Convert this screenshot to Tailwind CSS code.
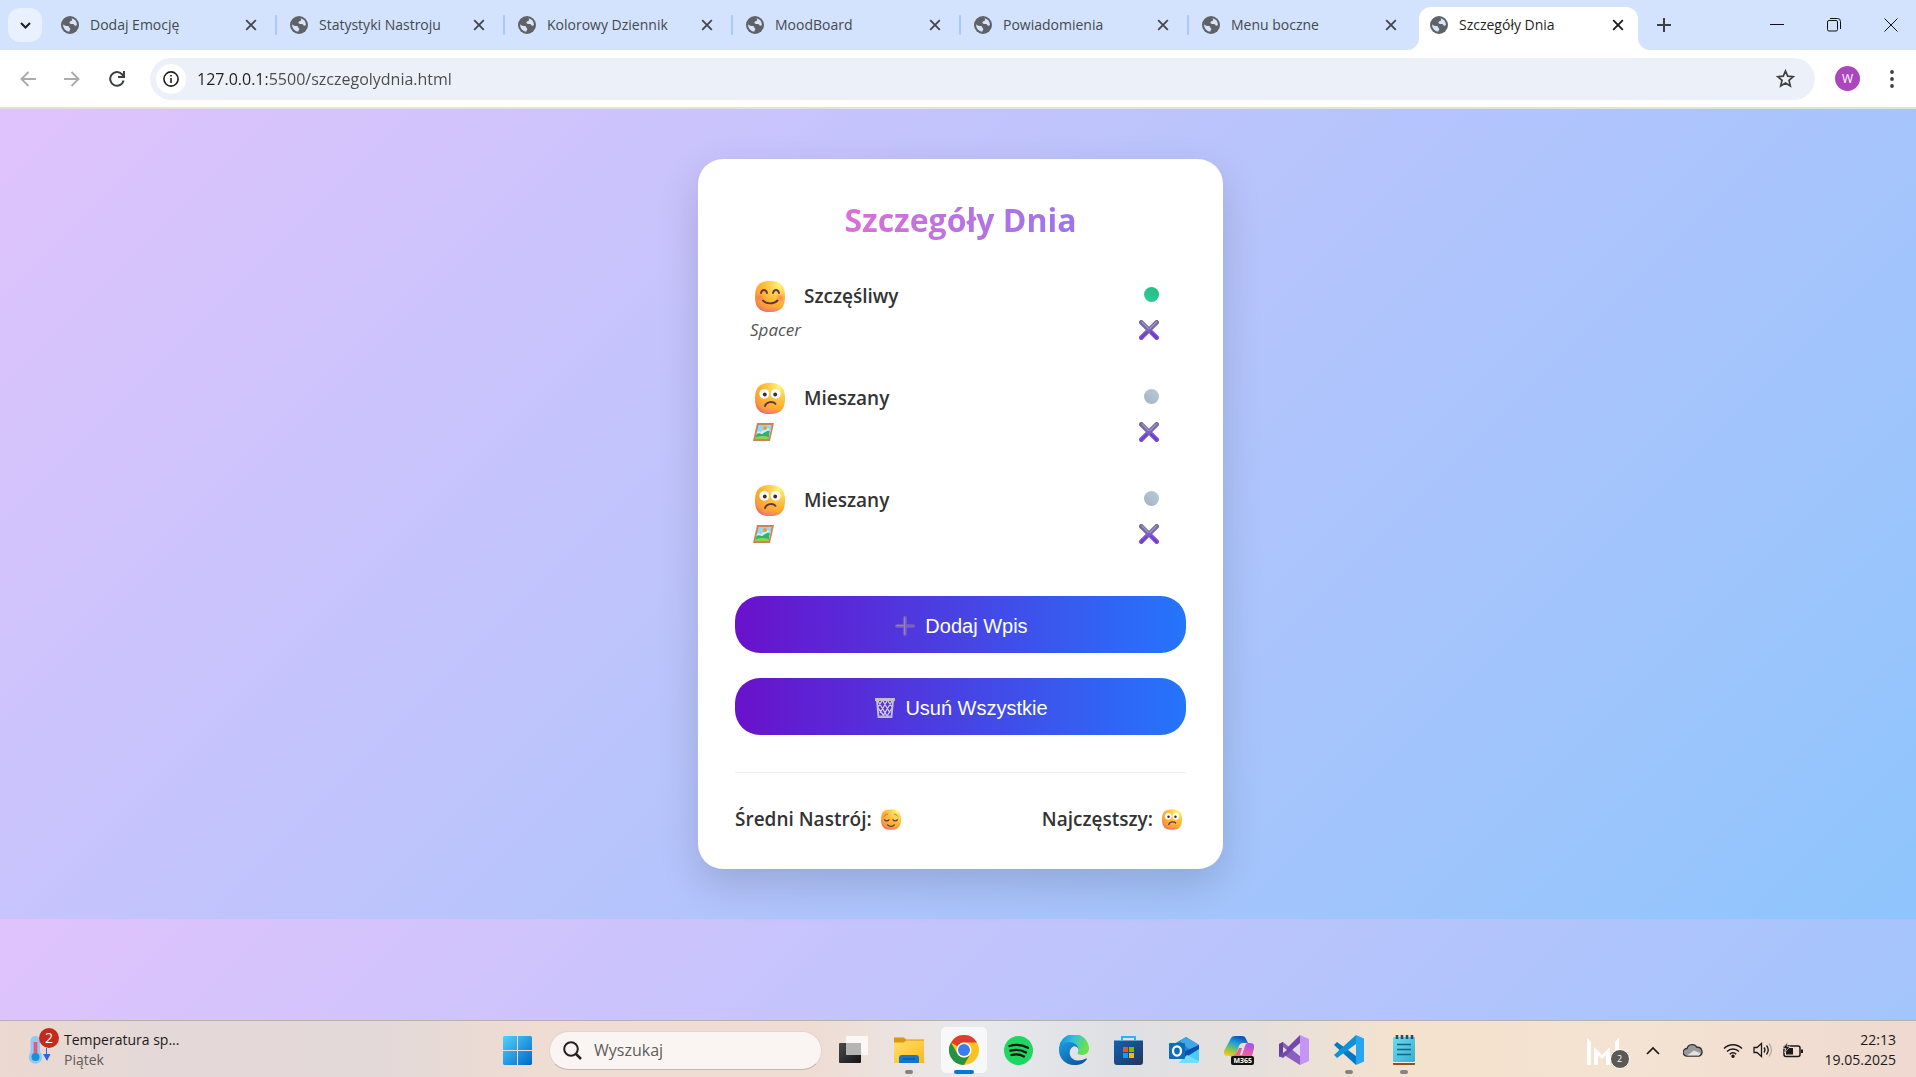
<!DOCTYPE html>
<html lang="pl">
<head>
<meta charset="utf-8">
<meta name="viewport" content="width=device-width, initial-scale=1">
<title>Szczegóły Dnia</title>
<script src="https://cdn.jsdelivr.net/npm/@tailwindcss/browser@4"></script>
</head>
<body class="flex min-h-screen flex-col font-['Open_Sans','Noto_Sans',sans-serif] text-[#333]">

<!-- Shared icon definitions -->
<svg class="absolute size-0" aria-hidden="true">
  <defs>
    <radialGradient id="gFace" cx="0.8" cy="0.12" r="1"><stop offset="0" stop-color="#fff478"/><stop offset="0.3" stop-color="#ffd04e"/><stop offset="0.65" stop-color="#ffb02e"/><stop offset="0.88" stop-color="#f79a3a"/><stop offset="1" stop-color="#f0705a"/></radialGradient>
    <radialGradient id="gBlush" cx="0.5" cy="1.05" r="0.55" gradientTransform="matrix(1 0 0 .4 0 .63)"><stop offset="0" stop-color="#f05fa0" stop-opacity="0.9"/><stop offset="1" stop-color="#f0709a" stop-opacity="0"/></radialGradient>
    <radialGradient id="gCheek"><stop offset="0" stop-color="#ff6a5e" stop-opacity="0.8"/><stop offset="1" stop-color="#ff7a5e" stop-opacity="0"/></radialGradient>
    <linearGradient id="gCross" x1="0" y1="0" x2="0.3" y2="1"><stop offset="0" stop-color="#74679c"/><stop offset="0.5" stop-color="#7a69b4"/><stop offset="1" stop-color="#7b4cd0"/></linearGradient>
    <linearGradient id="gWin" x1="0" y1="0" x2="1" y2="1"><stop offset="0" stop-color="#4fd3fb"/><stop offset="1" stop-color="#0067c8"/></linearGradient>
    <linearGradient id="gFolder" x1="0" y1="0" x2="1" y2="1"><stop offset="0" stop-color="#ffdf73"/><stop offset="1" stop-color="#fdb913"/></linearGradient>
    <linearGradient id="gEdgeA" x1="0" y1="0" x2="1" y2="0.3"><stop offset="0" stop-color="#0c7fd8"/><stop offset="0.5" stop-color="#2fc2df"/><stop offset="1" stop-color="#6be04a"/></linearGradient>
    <linearGradient id="gEdgeB" x1="0" y1="0" x2="1" y2="1"><stop offset="0" stop-color="#1b9de2"/><stop offset="1" stop-color="#0b4b97"/></linearGradient>
    <linearGradient id="gStore" x1="0" y1="0" x2="1" y2="1"><stop offset="0" stop-color="#0c63b8"/><stop offset="1" stop-color="#263559"/></linearGradient>
    <linearGradient id="gCopA" x1="0.6" y1="0" x2="0.2" y2="1"><stop offset="0" stop-color="#1450b4"/><stop offset="0.35" stop-color="#1d9fe0"/><stop offset="0.65" stop-color="#74c45a"/><stop offset="1" stop-color="#ffc61a"/></linearGradient>
    <linearGradient id="gCopB" x1="0.7" y1="0" x2="0.3" y2="1"><stop offset="0" stop-color="#a455ec"/><stop offset="0.5" stop-color="#ee5d9c"/><stop offset="1" stop-color="#ff7a3c"/></linearGradient>
    <linearGradient id="gNote" x1="0" y1="0" x2="1" y2="1"><stop offset="0" stop-color="#72dbee"/><stop offset="1" stop-color="#37add0"/></linearGradient>
    <linearGradient id="gDark" x1="0" y1="0" x2="1" y2="1"><stop offset="0" stop-color="#4a4a4a"/><stop offset="1" stop-color="#151515"/></linearGradient>

    <symbol id="globe" viewBox="0 0 18 18"><circle cx="9" cy="9" r="9" fill="#5f6368"/><path d="M2 7.600A7 7 0 0 1 8 2l-.2 1.300c0 .8-1.700.7-1.700 1.700 0 .9 1 .6 1 1.500 0 .7-.6 1.200-.2 1.700.4.500 1.300.3 2.300.3 1.600 0 1.300 1.600 2.200 1.900.8.300 2.200.1 2.400.9.200.8-1 1.200-1.600 1.800-.7.800-1.400 2.200-3.200 2.700-1.400.2-2.600 0-3.500-.5.600-.7 1.700-.6 2.200-1.400.4-.7-.3-1.300-.9-1.900-.8-.8-1.400-1.500-2.600-1.800C3 9.800 2.100 9.300 2 7.600z" fill="#5f6368"/><path d="M2.100 8.200c1.700 1.600 3 1.700 4.600 1.700 1.300 0 1.500.8 1.600 1.700.1.800.9.700 1 1.500.1 1-1 1.200-1 2.700A7 7 0 0 1 2.100 8.200z" fill="#d8e4fa"/><path d="M10.600 2.200A7 7 0 0 1 15.900 8.800c-.5 1-1.300 1.200-2.100.7-.8-.5-.6-1.500-1.700-1.600-1.300-.1-2.300.4-3.200-.3-.9-.8-.4-2 .5-2.400 1-.4 1.700-.3 1.700-1.300 0-.7-.3-1.100-.6-1.700z" fill="#d8e4fa"/></symbol>
    <symbol id="close" viewBox="0 0 12 12"><path d="M1.200 1.200l9.600 9.600M10.800 1.200l-9.600 9.600" stroke="currentColor" stroke-width="1.900" fill="none"/></symbol>
    <symbol id="head" viewBox="0 0 30 31"><path d="M15 0C26 0 30 5 30 15.500S26 31 15 31 0 26 0 15.500 4 0 15 0z" fill="url(#gFace)"/><path d="M15 0C26 0 30 5 30 15.500S26 31 15 31 0 26 0 15.500 4 0 15 0z" fill="url(#gBlush)"/></symbol>
    <symbol id="happy" viewBox="0 0 30 31"><use href="#head" width="30" height="31"/><circle cx="4.500" cy="17" r="5" fill="url(#gCheek)"/><circle cx="25.500" cy="17" r="5" fill="url(#gCheek)"/><path d="M6 12c1-4 5-4 6 0M18 12c1-4 5-4 6 0M8 19.500c3 3.800 11 3.800 14.500 0" fill="none" stroke="#5b3450" stroke-width="1.900" stroke-linecap="round"/></symbol>
    <symbol id="mixed" viewBox="0 0 30 31"><use href="#head" width="30" height="31"/><circle cx="9.300" cy="10.800" r="4.900" fill="#fff"/><circle cx="20.700" cy="10.800" r="4.900" fill="#fff"/><circle cx="9.800" cy="11.500" r="1.900" fill="#402a32"/><circle cx="20.200" cy="11.500" r="1.900" fill="#402a32"/><path d="M10 23c1.500-4.700 8-5 10.500-2.200" fill="none" stroke="#5b3450" stroke-width="1.900" stroke-linecap="round"/></symbol>
    <symbol id="calm" viewBox="0 0 30 31"><use href="#head" width="30" height="31"/><path d="M5.500 16c1.500 2 5 2 6.500 0M18 16c1.500 2 5 2 6.500 0M10 23.500c2.500 3 7.500 3 10 0" fill="none" stroke="#5b3450" stroke-width="2" stroke-linecap="round"/><path d="M5 10.500c1-2 3-3 5-3M20 7.500c2 0 4 1 5 3" fill="none" stroke="#b2611f" stroke-width="1.300" stroke-linecap="round"/></symbol>
    <symbol id="cross" viewBox="0 0 20 20"><path d="M2.300 2.300l15.400 15.400M17.700 2.300L2.300 17.700" stroke="url(#gCross)" stroke-width="4.600" stroke-linecap="round"/><path d="M2.800 1.800l6.500 6.500M17.500 1.800L11 8.300" stroke="#a29bc2" stroke-width="1.200" stroke-linecap="round"/><path d="M2 18.300l6-6M18 18.300l-6-6" stroke="#7334dc" stroke-width="1.300" stroke-linecap="round"/></symbol>
    <symbol id="picture" viewBox="0 0 21 18"><path d="M4 0h17l-4 18H0z" fill="#cf8254"/><path d="M5.500 2h13.200l-3 14H2.400z" fill="#8fd9f8"/><path d="M3.800 9.500c1.800-2 2.600-1 3.700-.3 2-2 4-2 5.500-3.500 1.500-.8 3-.4 4.500 1.500l-1.800 8.800H2.400z" fill="#cdeffb"/><path d="M3.500 11c3-1.700 4 .4 5.500 0 2-.7 4-3.200 7.800-3.400L15.700 16H2.400z" fill="#32b266"/><path d="M2.800 14.600c4-2 9-1.800 13.200-.4l-.4 1.800H2.400z" fill="#93cf58"/><circle cx="12" cy="5" r="2" fill="#f79b1e"/></symbol>
  </defs>
</svg>

<!-- Browser tabs -->
<header>
  <div class="flex h-[50px] items-stretch bg-[#d3e3fd]">
    <button aria-label="Wyszukaj karty" class="mt-2 ml-2 flex h-[34px] w-[34px] shrink-0 items-center justify-center rounded-xl bg-[#e9f0fe]"><svg class="h-[7px] w-[11px]" viewBox="0 0 11 7"><path d="M1 1l4.500 4.500L10 1" fill="none" stroke="#1f1f1f" stroke-width="2"/></svg></button>
    <nav aria-label="Karty" class="ml-[7px] flex min-w-0 text-sm text-[#45494f]">
      <div class="flex h-[50px] w-[228px] items-center"><svg class="ml-3 size-[18px] shrink-0"><use href="#globe"/></svg><a href="#" class="ml-[11px] flex-1 truncate">Dodaj Emocję</a><button aria-label="Zamknij" class="mr-[18px]"><svg class="size-3"><use href="#close"/></svg></button><span class="h-5 w-[2px] rounded bg-[#a8c7fa]"></span></div>
      <div class="flex h-[50px] w-[228px] items-center"><svg class="ml-[13px] size-[18px] shrink-0"><use href="#globe"/></svg><a href="#" class="ml-[11px] flex-1 truncate">Statystyki Nastroju</a><button aria-label="Zamknij" class="mr-[18px]"><svg class="size-3"><use href="#close"/></svg></button><span class="h-5 w-[2px] rounded bg-[#a8c7fa]"></span></div>
      <div class="flex h-[50px] w-[228px] items-center"><svg class="ml-[13px] size-[18px] shrink-0"><use href="#globe"/></svg><a href="#" class="ml-[11px] flex-1 truncate">Kolorowy Dziennik</a><button aria-label="Zamknij" class="mr-[18px]"><svg class="size-3"><use href="#close"/></svg></button><span class="h-5 w-[2px] rounded bg-[#a8c7fa]"></span></div>
      <div class="flex h-[50px] w-[228px] items-center"><svg class="ml-[13px] size-[18px] shrink-0"><use href="#globe"/></svg><a href="#" class="ml-[11px] flex-1 truncate">MoodBoard</a><button aria-label="Zamknij" class="mr-[18px]"><svg class="size-3"><use href="#close"/></svg></button><span class="h-5 w-[2px] rounded bg-[#a8c7fa]"></span></div>
      <div class="flex h-[50px] w-[228px] items-center"><svg class="ml-[13px] size-[18px] shrink-0"><use href="#globe"/></svg><a href="#" class="ml-[11px] flex-1 truncate">Powiadomienia</a><button aria-label="Zamknij" class="mr-[18px]"><svg class="size-3"><use href="#close"/></svg></button><span class="h-5 w-[2px] rounded bg-[#a8c7fa]"></span></div>
      <div class="flex h-[50px] w-[228px] items-center"><svg class="ml-[13px] size-[18px] shrink-0"><use href="#globe"/></svg><a href="#" class="ml-[11px] flex-1 truncate">Menu boczne</a><button aria-label="Zamknij" class="mr-[20px]"><svg class="size-3"><use href="#close"/></svg></button></div>
      <div class="relative mt-[7px] ml-[2px] flex h-[43px] w-[219px] items-center rounded-t-xl bg-white pb-[7px] text-[#1f1f1f]">
        <svg class="absolute bottom-0 -left-3 size-3" viewBox="0 0 12 12"><path d="M12 0v12H0A12 12 0 0 0 12 0z" fill="#fff"/></svg>
        <svg class="absolute -right-3 bottom-0 size-3" viewBox="0 0 12 12"><path d="M0 0v12h12A12 12 0 0 1 0 0z" fill="#fff"/></svg>
        <svg class="ml-[11px] size-[18px] shrink-0"><use href="#globe"/></svg><a href="#" aria-current="page" class="ml-[11px] flex-1 truncate">Szczegóły Dnia</a><button aria-label="Zamknij" class="mr-[14px]"><svg class="size-3"><use href="#close"/></svg></button>
      </div>
    </nav>
    <button aria-label="Nowa karta" class="ml-[18px] flex w-4 items-center justify-center"><svg class="size-[14px]" viewBox="0 0 14 14"><path d="M7 0v14M0 7h14" stroke="#3c4043" stroke-width="2"/></svg></button>
    <div class="ml-auto flex items-center gap-[43px] pr-[18px]">
      <button aria-label="Minimalizuj"><svg class="size-[14px]" viewBox="0 0 14 14"><path d="M0 6.500h14" stroke="#111"/></svg></button>
      <button aria-label="Przywróć"><svg class="size-[14px]" viewBox="0 0 14 14" fill="none" stroke="#111"><rect x="0.500" y="2.500" width="10" height="10.500" rx="1.500"/><path d="M3 .5h7.500a3 3 0 0 1 3 3V11"/></svg></button>
      <button aria-label="Zamknij okno"><svg class="size-[14px]" viewBox="0 0 14 14"><path d="M.5.5l13 13M13.500.5l-13 13" stroke="#111"/></svg></button>
    </div>
  </div>

  <!-- Address bar -->
  <div class="flex h-[59px] items-center border-b-2 border-[#dfe1e3] bg-white">
    <button aria-label="Wstecz" class="ml-[20px]"><svg class="size-4" viewBox="0 0 16 16" fill="none" stroke="#ababab" stroke-width="1.900"><path d="M16 8H1.500M8.500 1L1.500 8l7 7"/></svg></button>
    <button aria-label="Dalej" class="ml-[28px]"><svg class="size-4" viewBox="0 0 16 16" fill="none" stroke="#ababab" stroke-width="1.900"><path d="M0 8h14.500M7.500 1l7 7-7 7"/></svg></button>
    <button aria-label="Odśwież" class="ml-[29px]"><svg class="size-4" viewBox="0 0 16 16" fill="none" stroke="#3c4043" stroke-width="2"><path d="M14.600 9.500A6.800 6.800 0 1 1 13 3.300l1.500 1.600"/><path d="M15 0v6H9"/></svg></button>
    <div class="ml-[25px] flex h-[42px] min-w-0 flex-1 items-center rounded-full bg-[#ecf0f9] pr-[20px]">
      <button aria-label="Informacje o stronie" class="ml-[6px] flex size-[30px] shrink-0 items-center justify-center rounded-full bg-white"><svg class="size-4" viewBox="0 0 16 16"><circle cx="8" cy="8" r="7.100" fill="none" stroke="#1f1f1f" stroke-width="1.600"/><path d="M8 7v5M8 4v1.600" stroke="#1f1f1f" stroke-width="1.600"/></svg></button>
      <input aria-label="Adres" value="127.0.0.1:5500/szczegolydnia.html" class="ml-[11px] min-w-0 flex-1 bg-[linear-gradient(90deg,#1f1f1f_70px,#474a4e_70px)] bg-clip-text text-base text-transparent outline-none">
      <button aria-label="Dodaj do zakładek"><svg class="size-[19px]" viewBox="0 0 19 19"><path d="M9.500 2l2.200 5.200 5.600.5-4.300 3.700 1.300 5.500-4.800-2.900-4.800 2.900L6 11.400 1.700 7.700l5.600-.5z" fill="none" stroke="#3c4043" stroke-width="1.700"/></svg></button>
    </div>
    <button class="ml-5 flex size-[25px] items-center justify-center rounded-full bg-[#ab47bc] text-xs text-white">W</button>
    <button aria-label="Menu" class="mr-[22px] ml-[30px]"><svg class="h-[18px] w-1" viewBox="0 0 4 18" fill="#3c4043"><circle cx="2" cy="2" r="1.900"/><circle cx="2" cy="9" r="1.900"/><circle cx="2" cy="16" r="1.900"/></svg></button>
  </div>
</header>

<!-- Page -->
<main class="flex-1 bg-[linear-gradient(135deg,#e0c3fc,#8ec5fc)] bg-[length:100%_810px] pt-[50px] pl-[5px]">
  <section class="mx-auto w-[525px] max-w-full rounded-[25px] bg-white px-[37px] pt-[39px] pb-[34px] shadow-[0_15px_40px_rgba(0,0,0,0.15)]">
    <h1 class="text-center text-[32px] leading-[44px] font-bold"><span class="inline-block bg-linear-to-r/srgb from-[#da70d6] to-[#9a75ee] bg-clip-text text-transparent">Szczegóły Dnia</span></h1>

    <ul class="mt-[25px] flex flex-col">
      <li class="h-[102px] px-[15px] pt-[14px]">
        <div class="flex h-[30px] items-center"><svg class="ml-[5px] h-[31px] w-[30px]"><use href="#happy"/></svg><span class="ml-[19px] flex-1 text-[19px] font-semibold">Szczęśliwy</span><span class="mr-3 mb-[3px] size-[15px] rounded-full bg-linear-to-bl from-[#17bd84] to-[#34cd98]"></span></div>
        <div class="mt-1 flex h-[30px] items-center justify-between"><em class="text-[17px] text-[#555]">Spacer</em><button aria-label="Usuń wpis" class="mr-3"><svg class="size-5"><use href="#cross"/></svg></button></div>
      </li>
      <li class="h-[102px] px-[15px] pt-[14px]">
        <div class="flex h-[30px] items-center"><svg class="ml-[5px] h-[31px] w-[30px]"><use href="#mixed"/></svg><span class="ml-[19px] flex-1 text-[19px] font-semibold">Mieszany</span><span class="mr-3 mb-[3px] size-[15px] rounded-full bg-linear-to-bl from-[#bccad6] to-[#a3b3c5]"></span></div>
        <div class="mt-1 flex h-[30px] items-center justify-between"><svg class="ml-[3px] h-[18px] w-[21px]"><use href="#picture"/></svg><button aria-label="Usuń wpis" class="mr-3"><svg class="size-5"><use href="#cross"/></svg></button></div>
      </li>
      <li class="h-[102px] px-[15px] pt-[14px]">
        <div class="flex h-[30px] items-center"><svg class="ml-[5px] h-[31px] w-[30px]"><use href="#mixed"/></svg><span class="ml-[19px] flex-1 text-[19px] font-semibold">Mieszany</span><span class="mr-3 mb-[3px] size-[15px] rounded-full bg-linear-to-bl from-[#bccad6] to-[#a3b3c5]"></span></div>
        <div class="mt-1 flex h-[30px] items-center justify-between"><svg class="ml-[3px] h-[18px] w-[21px]"><use href="#picture"/></svg><button aria-label="Usuń wpis" class="mr-3"><svg class="size-5"><use href="#cross"/></svg></button></div>
      </li>
    </ul>

    <div class="mt-[23px] flex flex-col gap-[25px] font-['Liberation_Sans',Arial,sans-serif] text-xl text-white">
      <button class="flex h-[57px] items-center justify-center gap-[10px] rounded-[25px] bg-linear-to-r/srgb from-[#6a11cb] to-[#2575fc] pt-[2px] pl-[2px]"><svg class="size-5" viewBox="0 0 20 20"><path d="M10 1.800v16.400M1.800 10h16.400" stroke="#7b62b8" stroke-width="3.600" stroke-linecap="round"/><path d="M9.500 1.500v17M1.500 9.500H9" stroke="#9385b4" stroke-width="1"/></svg>Dodaj Wpis</button>
      <button class="flex h-[57px] items-center justify-center gap-[10px] rounded-[25px] bg-linear-to-r/srgb from-[#6a11cb] to-[#2575fc] pt-[2px] pl-[2px]"><svg class="size-5" viewBox="0 0 20 20" fill="none"><path d="M2 3l1.500 16h13L18 3" stroke="#c9c4d8" stroke-width="1.800"/><path d="M0 1.500h20" stroke="#c3bcc9" stroke-width="3"/><path d="M3 3l9 15M8 3l7 12M13 3l4 6M3 10l6 8M17 3L8 18M12 3L5 15M7 3L3 9M17 10l-5 8" stroke="#d3cce4" stroke-width="1.300"/><path d="M3 18.500h14" stroke="#b9b4c6" stroke-width="2"/></svg>Usuń Wszystkie</button>
    </div>

    <footer class="mt-[37px] flex h-[63px] items-end justify-between border-t border-[#eee] text-[19px] font-semibold">
      <p class="flex h-8 items-center gap-[9px]">Średni Nastrój: <svg class="h-[21px] w-5"><use href="#calm"/></svg></p>
      <p class="flex h-8 items-center gap-[9px] pr-1">Najczęstszy: <svg class="h-[21px] w-5"><use href="#mixed"/></svg></p>
    </footer>
  </section>
</main>

<!-- Taskbar -->
<footer class="grid h-[57px] grid-cols-[1fr_auto_1fr] items-center border-t border-[#b9aeb0] bg-[linear-gradient(90deg,#ecd9d0,#e4d9d8_8%,#e3d9d8_20%,#efdcd2_28%,#efdcd2_42%,#e8e9ec_51%,#dfe0e4_58%,#e6e0dc_66%,#f4e2cd_73%,#f4e3d2_85%,#efd9d0)] pt-[2px]">
  <button class="relative flex w-[260px] items-center pl-[28px] text-left text-sm leading-5">
    <svg class="h-7 w-6 shrink-0" viewBox="0 0 24 28"><rect x="2.500" y="0" width="9.500" height="24" rx="4.700" fill="#92c8f4"/><circle cx="7.500" cy="21" r="6.800" fill="#92c8f4"/><rect x="5.700" y="6" width="3.600" height="12" fill="#df5a72"/><circle cx="7.500" cy="21" r="4" fill="#1691dd"/><path d="M19 12v6h3.500L19 25l-4-7h3v-6z" fill="#2f62e0"/></svg>
    <span class="absolute -top-[2px] left-[39px] flex size-5 items-center justify-center rounded-full bg-[#c42b1c] text-white">2</span>
    <span class="ml-3"><span class="block text-[#1a1a1a]">Temperatura sp...</span><span class="block text-[#5d5957]">Piątek</span></span>
  </button>
  <div class="flex items-center pl-[18px]">
    <button aria-label="Start" class="mr-[17px]"><svg class="size-[29px]" viewBox="0 0 29 29" fill="url(#gWin)"><path d="M1 0h13v14H0V1zM15 0h13l1 1v13H15zM0 15h14v14H1l-1-1zM15 15h14v13l-1 1H15z"/></svg></button>
    <label class="flex h-[39px] w-[273px] items-center rounded-full border border-[#e2d3cd] border-b-[#c3b5b0] bg-[#faf5f2] pl-[13px]"><svg class="size-[19px] shrink-0" viewBox="0 0 19 19" fill="none" stroke="#222" stroke-width="2"><circle cx="8" cy="8" r="6.800"/><path d="M13 13l5 5" stroke-width="2.500"/></svg><input aria-label="Wyszukaj" placeholder="Wyszukaj" class="ml-3 min-w-0 flex-1 text-base outline-none placeholder:text-[#5f5c5a]"></label>
    <div class="ml-[4px] flex">
      <button aria-label="Widok zadań" class="flex h-12 w-[55px] items-center justify-center"><svg class="size-[29px]" viewBox="0 0 29 29"><rect y="7" width="22" height="20" rx="1" fill="url(#gDark)"/><rect x="7" y="0" width="22" height="19" rx="1" fill="#fff" fill-opacity="0.750"/><rect x="7" y="7" width="15" height="12" fill="#b5b5b5"/></svg></button>
      <button aria-label="Eksplorator plików" class="relative flex h-12 w-[55px] items-center justify-center"><svg class="size-[30px]" viewBox="0 0 30 30"><path d="M0 2.500h10l2 2h18v5H0z" fill="#d9960e"/><path d="M0 7.500h10l2-2h18V28H0z" fill="url(#gFolder)"/><path d="M5 28v-5q0-3 3-3h14q3 0 3 3v5z" fill="#0f78d4"/><path d="M9 24h12" stroke="#084c8f"/></svg><span class="absolute bottom-0 h-1 w-2 rounded-full bg-[#868383]"></span></button>
      <button aria-label="Chrome" class="relative flex h-12 w-[55px] items-center justify-center"><span class="flex size-12 items-center justify-center rounded-md border border-[#e6e8ea] bg-[#f7f8fa]"><svg class="size-[30px]" viewBox="0 0 30 30"><circle cx="15" cy="15" r="15" fill="#fcc31e"/><path d="M2 7.500A15 15 0 0 1 28 7.500H15a7.500 7.500 0 0 0-6.500 3.700z" fill="#e33b2e"/><path d="M2 7.500A15 15 0 0 0 15 30l6.500-11.200a7.500 7.500 0 0 1-13 0z" fill="#229342"/><circle cx="15" cy="15" r="7.500" fill="#fff"/><circle cx="15" cy="15" r="6" fill="#3b7ded"/></svg></span><span class="absolute bottom-0 h-1 w-5 rounded-full bg-[#0078d4]"></span></button>
      <button aria-label="Spotify" class="flex h-12 w-[55px] items-center justify-center"><svg class="size-[29px]" viewBox="0 0 29 29"><circle cx="14.500" cy="14.500" r="14.500" fill="#1ed760"/><path d="M5.500 10c6-1.800 13-1.200 18.500 1.800M6.500 14.700c5.500-1.500 11-.8 15.500 1.800M7.500 19c4.500-1.200 9-.6 12.500 1.500" fill="none" stroke="#111" stroke-width="2.300" stroke-linecap="round"/></svg></button>
      <button aria-label="Edge" class="flex h-12 w-[55px] items-center justify-center"><svg class="size-[30px]" viewBox="0 0 30 30"><path d="M0 15A15 15 0 0 1 30 13c0 5-3.500 7-7 7-3 0-5-1-4.300-2.500C21 14 17 10 12 10 5 10 1 13 0 15z" fill="url(#gEdgeA)"/><path d="M0 15c0-4 4-8 10-8 5 0 9 3 9.500 7-1-2-3-3-5-2.500C10 13 9 21 14 24c4 2.500 9 1.500 13-.5.800-.4 1.300.3.800 1A15 15 0 0 1 15 30C6 30 0 23 0 15z" fill="url(#gEdgeB)"/></svg></button>
      <button aria-label="Microsoft Store" class="flex h-12 w-[55px] items-center justify-center"><svg class="size-[29px]" viewBox="0 0 29 29"><path d="M0 4.500h29V26q0 3-3 3H3q-3 0-3-3z" fill="url(#gStore)"/><path d="M8 5V1h13v4" fill="none" stroke="#2cb4f0" stroke-width="2"/><path d="M9 11h5v5H9z" fill="#f25022"/><path d="M15 11h5v5h-5z" fill="#7fba00"/><path d="M9 17h5v5H9z" fill="#00a4ef"/><path d="M15 17h5v5h-5z" fill="#ffb900"/></svg></button>
      <button aria-label="Outlook" class="flex h-12 w-[55px] items-center justify-center"><svg class="size-[30px]" viewBox="0 0 30 30"><path d="M5 9l12-7 13 8v5L14 24H5z" fill="#1a83d6"/><path d="M17 2l13 8-9 5-10-9z" fill="#40a6e6"/><path d="M30 10v5L14 25l-2-7z" fill="#0a4fae"/><path d="M30 14v11q0 3-3 3H10l4-4z" fill="#43cdf5"/><path d="M10 28h17q3 0 3-2L18 20z" fill="#6ee0fb"/><rect y="8" width="16" height="16" rx="1" fill="#0f6cbd"/><ellipse cx="8" cy="16" rx="4" ry="4.600" fill="none" stroke="#fff" stroke-width="2.300"/></svg></button>
      <button aria-label="Microsoft 365 Copilot" class="relative flex h-12 w-[55px] items-center justify-center"><svg class="size-[30px]" viewBox="0 0 30 30"><path d="M7 3q1-2 4-2h7q3 0 4 3l2 4h-5q-3 0-4 3l-2 6q-1 4-5 4H4q-5 0-4-5z" fill="url(#gCopA)"/><path d="M24 8h2q5 0 4 5l-2 8q-1 6-5 7H12q-3 0-4-5l-1-2q4 0 6-4l2-4h3l-2 7h2l3-9q1-3 3-3z" fill="url(#gCopB)"/></svg><span class="absolute right-3 bottom-[9px] rounded-xs bg-[#111] px-[2px] text-[7px] leading-[9px] font-bold text-white">M365</span></button>
      <button aria-label="Visual Studio" class="flex h-12 w-[55px] items-center justify-center"><svg class="size-[30px]" viewBox="0 0 30 30"><path d="M0 9l4-2 17 14v9L5 20 0 22z" fill="#8a5fc0"/><path d="M0 9l4-2v15l-4-1z" fill="#66409a"/><path d="M4 23L21 8V0L10 11 0 21z" fill="#7449ac"/><path d="M21 0l9 4v22l-9 4z" fill="#c495f5"/><path d="M21 9l-7 6 7 6z" fill="#e3dcea"/><path d="M4 12l4 3-4 3z" fill="#e3dcea"/></svg></button>
      <button aria-label="Visual Studio Code" class="relative flex h-12 w-[55px] items-center justify-center"><svg class="size-[30px]" viewBox="0 0 30 30"><path d="M0 10l3-3 19 14v9z" fill="#0179c4"/><path d="M0 20l3 3L22 9V0z" fill="#0b93dc"/><path d="M22 0l8 3.500v23L22 30z" fill="#27a4f2"/></svg><span class="absolute bottom-0 h-1 w-2 rounded-full bg-[#868383]"></span></button>
      <button aria-label="Notatnik" class="relative flex h-12 w-[55px] items-center justify-center"><svg class="h-[30px] w-[22px]" viewBox="0 0 22 30"><rect y="26" width="22" height="4" rx="1" fill="#9c4a12"/><rect y="25" width="22" height="3" fill="#f2efec"/><rect y="2" width="22" height="25" rx="1" fill="url(#gNote)"/><path d="M4 9.500h14M4 14.500h14M4 19.500h14" stroke="#0d6888" stroke-width="1.700"/><path d="M4 0v4M9 0v4M14 0v4M19 0v4" stroke="#12566f" stroke-width="2.600"/></svg><span class="absolute bottom-0 h-1 w-2 rounded-full bg-[#868383]"></span></button>
    </div>
  </div>
  <div class="flex items-center justify-end pr-5 text-[#1a1a1a]">
    <button aria-label="Aplikacja w tle, 2 powiadomienia" class="relative h-8 w-[43px]"><svg class="mt-[2px] h-[27px] w-[33px]" viewBox="0 0 33 27" fill="#fff"><path d="M0 0l4 4v23H0zM7 27V9l8 8 8-8v18h-4V17l-4 4-4-4v10zM28 4l4-4v20h-4z"/></svg><span class="absolute right-0 -bottom-[3px] flex size-5 items-center justify-center rounded-full border border-white bg-[#5c5853] text-[9px] text-white">2</span></button>
    <button aria-label="Pokaż ukryte ikony" class="ml-4"><svg class="h-[9px] w-[14px]" viewBox="0 0 14 9"><path d="M1 8l6-6 6 6" fill="none" stroke="currentColor" stroke-width="1.700"/></svg></button>
    <button aria-label="OneDrive" class="ml-[23px]"><svg class="h-[14px] w-5" viewBox="0 0 20 14"><path d="M4 13.200A3.600 3.600 0 0 1 4 5.500 5.500 5.500 0 0 1 14 4.300 4.600 4.600 0 0 1 16 13.200z" fill="#999" stroke="#333" stroke-width="1.300"/><path d="M4 12.500l7-5 6 2.500q.5 2-1.500 2.500z" fill="#e4e0dd"/></svg></button>
    <button aria-label="Sieć" class="ml-5"><svg class="h-[15px] w-5" viewBox="0 0 20 15" fill="none" stroke="currentColor" stroke-width="1.500"><path d="M1 5.500a12.700 12.700 0 0 1 18 0M4 8.500a8.500 8.500 0 0 1 12 0M6.800 11.200a4.500 4.500 0 0 1 6.400 0"/><circle cx="10" cy="13.200" r="1" fill="currentColor"/></svg></button>
    <button aria-label="Głośność" class="ml-[10px]"><svg class="h-4 w-5" viewBox="0 0 20 16" fill="none" stroke="currentColor" stroke-width="1.300"><path d="M1 5.500h3L8.500 1.500v13L4 10.500H1z"/><path d="M11 5.500q2 2.500 0 5M13.500 3.500q3.500 4.500 0 9"/><path d="M16 1.500q5 6.500 0 13" stroke="#b5aca5"/></svg></button>
    <button aria-label="Bateria" class="ml-[10px]"><svg class="h-4 w-5" viewBox="0 0 20 16"><rect x="1" y="4" width="16" height="10.500" rx="2" fill="none" stroke="#1a1a1a" stroke-width="1.500"/><path d="M3 6h7v6.500H3zM18 7.500h2v3.500h-2z" fill="#1a1a1a"/><path d="M4.500 0L0 6.500h3L1.500 11 7 4.500H4z" fill="#1a1a1a" stroke="#f2e0d2" stroke-width=".6"/></svg></button>
    <button class="ml-[22px] text-right text-sm leading-5"><time class="block">22:13</time><time class="block">19.05.2025</time></button>
  </div>
</footer>
</body>
</html>
